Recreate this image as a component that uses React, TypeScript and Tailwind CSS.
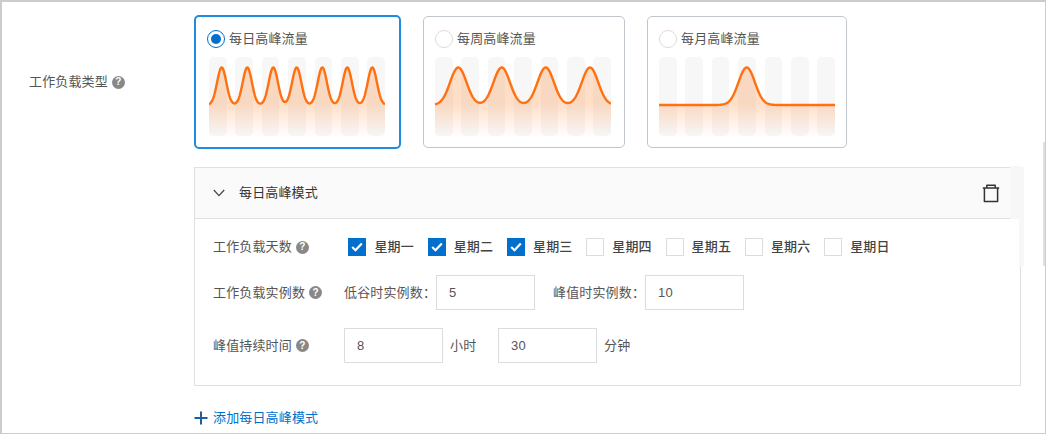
import React from "react";

const FONT = "font-['Liberation_Sans','Noto_Sans_CJK_SC',sans-serif]";

function wavePath(peaks: number[], sigma: number) {
  const pts: string[] = [];
  for (let x = 0; x <= 176; x += 0.5) {
    let v = 0;
    for (const p of peaks) v += Math.exp(-((x - p) ** 2) / (2 * sigma * sigma));
    pts.push(`${x},${(48 - 37.5 * Math.min(v, 1)).toFixed(2)}`);
  }
  return pts;
}

function Wave({ peaks, sigma, id }: { peaks: number[]; sigma: number; id: string }) {
  const pts = wavePath(peaks, sigma);
  return (
    <div className="relative w-[176px] h-[80px]">
      <div className="flex justify-between h-full">
        {[0, 1, 2, 3, 4, 5, 6].map((i) => (
          <div key={i} className="w-[17.5px] h-[79px] rounded-[5px] bg-[#f7f7f7]" />
        ))}
      </div>
      <svg className="absolute left-0 top-0" width="176" height="80" viewBox="0 0 176 80">
        <defs>
          <linearGradient id={id} x1="0" y1="0" x2="0" y2="80" gradientUnits="userSpaceOnUse">
            <stop offset="0.58" stopColor="#ff6a00" stopOpacity="0.22" />
            <stop offset="1" stopColor="#ff6a00" stopOpacity="0" />
          </linearGradient>
        </defs>
        <path d={`M0,80 L${pts.join(" L")} L176,80 Z`} fill={`url(#${id})`} />
        <path d={`M${pts.join(" L")}`} fill="none" stroke="#ff7010" strokeWidth="2.4" />
      </svg>
    </div>
  );
}

function Radio({ on }: { on?: boolean }) {
  return on ? (
    <span className="flex w-[18px] h-[18px] rounded-full border border-[#0070cc] items-center justify-center">
      <span className="block w-[10px] h-[10px] rounded-full bg-[#0070cc]" />
    </span>
  ) : (
    <span className="block w-[18px] h-[18px] rounded-full border border-[#dcdcdc] bg-white" />
  );
}

function Help() {
  return (
    <span className="inline-flex w-[13px] h-[13px] rounded-full bg-[#888888] text-white text-[10px] font-bold items-center justify-center leading-none shrink-0">
      ?
    </span>
  );
}

function Check({ on }: { on?: boolean }) {
  return on ? (
    <span className="flex w-[18px] h-[18px] bg-[#0070cc] items-center justify-center shrink-0">
      <svg width="12" height="10" viewBox="0 0 12 10">
        <path d="M1.2 5 L4.5 8.2 L10.8 1.6" fill="none" stroke="#fff" strokeWidth="2.2" />
      </svg>
    </span>
  ) : (
    <span className="block w-[18px] h-[18px] border border-[#dcdcdc] bg-white shrink-0" />
  );
}

function Field({ value, w }: { value: string; w: string }) {
  return (
    <div className={`${w} h-[35px] border border-[#dcdcdc] bg-white flex items-center pl-[12px] pt-[1px] text-[13px] text-[#555] shrink-0`}>
      {value}
    </div>
  );
}

const days: [string, boolean][] = [
  ["星期一", true],
  ["星期二", true],
  ["星期三", true],
  ["星期四", false],
  ["星期五", false],
  ["星期六", false],
  ["星期日", false],
];

export default function App() {
  return (
    <div className={`${FONT} relative w-[1046px] h-[434px] overflow-hidden bg-white border-t-2 border-l-2 border-b border-r border-[#cccccc] text-[13px] tracking-[0.15px] text-[#555] whitespace-nowrap`}>
      {/* workload type */}
      <div className="flex pt-[13px]">
        <div className="w-[192px] shrink-0 pl-[27px] pt-[58px] flex items-start gap-[4px]">
          <div className="flex items-center gap-[4px] h-[18px]">
            <span>工作负载类型</span>
            <Help />
          </div>
        </div>
        <div className="flex items-start">
          <div className="w-[207px] h-[134px] rounded-[5px] border-2 border-[#1f8ce0] pl-[13px] pt-[12px]">
            <div className="flex items-center gap-[4px] h-[20px] ml-[-2px]"><Radio on /><span>每日高峰流量</span></div>
            <div className="mt-[8px]"><Wave id="g1" peaks={[12.7, 38.3, 64.3, 87.7, 113.3, 138.3, 163.3]} sigma={4.6} /></div>
          </div>
          <div className="ml-[22px] mt-[1px] w-[202px] h-[132px] rounded-[5px] border border-[#c0c6cc] pl-[11px] pt-[12px]">
            <div className="flex items-center gap-[4px] h-[20px]"><Radio /><span>每周高峰流量</span></div>
            <div className="mt-[8px]"><Wave id="g2" peaks={[23.3, 66.7, 110.7, 155]} sigma={8.2} /></div>
          </div>
          <div className="ml-[22px] mt-[1px] w-[200px] h-[132px] rounded-[5px] border border-[#c0c6cc] pl-[11px] pt-[12px]">
            <div className="flex items-center gap-[4px] h-[20px]"><Radio /><span>每月高峰流量</span></div>
            <div className="mt-[8px]"><Wave id="g3" peaks={[87.7]} sigma={8.2} /></div>
          </div>
        </div>
      </div>

      {/* panel */}
      <div className="ml-[192px] mt-[18px] w-[827px] h-[219px] border border-[#e0e0e0]">
        <div className="h-[51px] bg-[#fafafa] border-b border-[#e0e0e0] flex items-center pl-[18px] pr-[20px]">
          <svg width="12" height="8" viewBox="0 0 12 8" className="mr-[14px]">
            <path d="M0.8 1 L6 6.6 L11.2 1" fill="none" stroke="#444" strokeWidth="1.2" />
          </svg>
          <span className="text-[#333]">每日高峰模式</span>
          <svg width="18" height="19" viewBox="0 0 18 19" className="ml-auto" fill="none" stroke="#333" strokeWidth="1.5" strokeLinejoin="round">
            <path d="M0.8 4 H17.2" />
            <path d="M4.8 4 V1.2 H13.2 V4" />
            <path d="M2.4 4 V17.6 H15.6 V4" />
          </svg>
        </div>

        <div className="pl-[18px] pt-[19px]">
          <div className="flex items-center h-[18px]">
            <div className="w-[135.4px] flex items-center gap-[4px] shrink-0">
              <span>工作负载天数</span><Help />
            </div>
            <div className="flex">
              {days.map(([d, on]) => (
                <div key={d} className="w-[79.3px] flex items-center gap-[8px] text-[#444] font-medium">
                  <Check on={on} /><span>{d}</span>
                </div>
              ))}
            </div>
          </div>

          <div className="flex items-center mt-[19px]">
            <div className="w-[131px] flex items-center gap-[4px] shrink-0">
              <span>工作负载实例数</span><Help />
            </div>
            <span className="w-[92px] shrink-0">低谷时实例数：</span>
            <Field value="5" w="w-[99px]" />
            <span className="ml-[18px] w-[92px] shrink-0">峰值时实例数：</span>
            <Field value="10" w="w-[99px]" />
          </div>

          <div className="flex items-center mt-[18px]">
            <div className="w-[131px] flex items-center gap-[4px] shrink-0">
              <span>峰值持续时间</span><Help />
            </div>
            <Field value="8" w="w-[99px]" />
            <span className="ml-[7px] w-[48px] shrink-0">小时</span>
            <Field value="30" w="w-[99px]" />
            <span className="ml-[7px]">分钟</span>
          </div>
        </div>
      </div>

      {/* add */}
      <div className="ml-[192px] mt-[23px] flex items-center gap-[5px] text-[#0070cc] h-[18px]">
        <svg width="14" height="14" viewBox="0 0 14 14">
          <path d="M7 0.5 V13.5 M0.5 7 H13.5" fill="none" stroke="#1a5f9e" strokeWidth="2" />
        </svg>
        <span>添加每日高峰模式</span>
      </div>

      {/* faded overlays at the right edge */}
      <div className="absolute left-[1008px] top-[164px] w-[10px] h-[53px] bg-[#f7f7f7]" />
      <div className="absolute left-[1017px] top-[165px] w-[5px] h-[99px] bg-[#f7f7f7]" />
      <div className="absolute left-[1041px] top-[140px] w-[2px] h-[124px] bg-[#e0e0e0]" />
    </div>
  );
}
